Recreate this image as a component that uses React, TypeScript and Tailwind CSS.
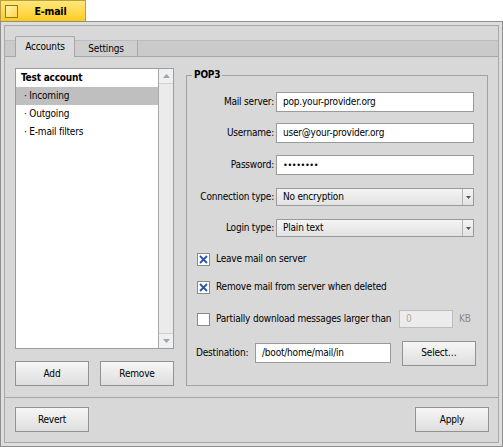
import type { ReactNode } from "react"

function Button({ children, className = "" }: { children: ReactNode; className?: string }) {
  return (
    <button
      className={`h-[25px] w-[74px] border border-[#929292] bg-linear-to-b from-[#f6f6f6] to-[#dedede] text-black ${className}`}
    >
      {children}
    </button>
  )
}

function TextField({ value, className = "" }: { value: string; className?: string }) {
  return (
    <div
      className={`flex h-[20px] items-center whitespace-nowrap border border-[#9a9a9a] bg-white pl-[6px] ${className}`}
    >
      {value}
    </div>
  )
}

function MenuField({ value }: { value: string }) {
  return (
    <div className="flex h-[18px] w-[198px] items-center border border-[#9a9a9a] bg-linear-to-b from-[#f4f4f4] to-[#e2e2e2]">
      <span className="flex-1 pl-[6px]">{value}</span>
      <span className="flex h-full w-[11px] items-center justify-center border-l border-[#b4b4b4]">
        <svg width="5" height="3" viewBox="0 0 5 3">
          <path d="M0 0h5L2.5 3z" fill="#555" />
        </svg>
      </span>
    </div>
  )
}

function CheckBox({ checked }: { checked: boolean }) {
  return (
    <span className="flex h-[13px] w-[13px] shrink-0 items-center justify-center border border-[#8a8a8a] bg-white">
      {checked && (
        <svg width="9" height="9" viewBox="0 0 9 9">
          <path d="M1 1l7 7M8 1L1 8" stroke="#2a55a8" strokeWidth="1.8" />
        </svg>
      )}
    </span>
  )
}

function Row({ label, children }: { label: string; children: ReactNode }) {
  return (
    <div className="flex items-center">
      <span className="w-[89px] whitespace-nowrap pr-[2px] text-right">{label}</span>
      {children}
    </div>
  )
}

function ScrollArrow({ up }: { up: boolean }) {
  return (
    <div className="flex h-[14px] items-center justify-center bg-[#f0f0f0]">
      <svg width="7" height="4" viewBox="0 0 7 4">
        <path d={up ? "M0 4h7L3.5 0z" : "M0 0h7L3.5 4z"} fill="#9aa6b8" />
      </svg>
    </div>
  )
}

export default function App() {
  return (
    <div className="flex h-[447px] w-[503px] flex-col bg-white font-['DejaVu_Sans_Condensed','DejaVu_Sans',sans-serif] font-stretch-condensed text-[10px] leading-none tracking-[-0.2px] text-black">
      {/* window tab */}
      <div className="flex h-[21px] w-[86px] items-center border border-b-0 border-[#b8a040] bg-linear-to-b from-[#ffe777] to-[#ffcb0c]">
        <span className="ml-[4px] h-[13px] w-[13px] border border-[#8f7a20] bg-linear-to-br from-[#fff3b0] to-[#ffd43a]" />
        <span className="flex-1 pr-[2px] text-center text-[10.5px] font-bold">E-mail</span>
      </div>

      {/* window frame */}
      <div className="flex-1 border border-[#8e8e8e] bg-[#dedede] p-[3px]">
        <div className="flex h-full flex-col border border-[#a8a8a8] bg-[#d8d8d8]">
          {/* tab bar */}
          <div className="mt-[10px] flex h-[21px] items-end">
            <div className="h-[17px] w-[10px] border-y border-t-[#bdbdbd] border-b-[#a6a6a6] bg-[#cacaca]" />
            <div className="flex h-[21px] w-[60px] items-center justify-center rounded-t-[2px] border border-b-0 border-[#a6a6a6] bg-[#dadada]">
              Accounts
            </div>
            <div className="flex h-[17px] w-[63px] items-center justify-center border-y border-r border-t-[#bdbdbd] border-r-[#a6a6a6] border-b-[#a6a6a6] bg-[#cecece]">
              Settings
            </div>
            <div className="h-[17px] flex-1 border-y border-t-[#bdbdbd] border-b-[#a6a6a6] bg-[#cacaca]" />
          </div>

          {/* tab panel */}
          <div className="flex h-[341px] border-b border-[#a6a6a6] px-[10px] pt-[11px]">
            <div className="flex w-[159px] flex-col">
              <div className="flex h-[281px] border border-[#9c9c9c] bg-white">
                <div className="flex-1">
                  <div className="flex h-[18px] items-center pl-[5px] font-bold">Test account</div>
                  <div className="flex h-[18px] items-center bg-[#bfbfbf] pl-[8px]">· Incoming</div>
                  <div className="flex h-[18px] items-center pl-[8px]">· Outgoing</div>
                  <div className="flex h-[18px] items-center pl-[8px]">· E-mail filters</div>
                </div>
                <div className="flex w-[15px] flex-col border-l border-[#a8a8a8] bg-[#ebebeb]">
                  <ScrollArrow up />
                  <div className="flex-1 border-y border-[#d0d0d0]" />
                  <ScrollArrow up={false} />
                </div>
              </div>
              <div className="mt-[12px] flex gap-[11px]">
                <Button>Add</Button>
                <Button>Remove</Button>
              </div>
            </div>

            <div className="relative ml-[12px] mt-[7px] flex h-[311px] w-[302px] flex-col border border-[#a2a2a2] pt-[16px]">
              <span className="absolute -top-[6px] left-[5px] bg-[#d8d8d8] px-[2px] font-bold">POP3</span>
              <Row label="Mail server:">
                <TextField value="pop.your-provider.org" className="w-[198px]" />
              </Row>
              <div className="mt-[11px]">
                <Row label="Username:">
                  <TextField value="user@your-provider.org" className="w-[198px]" />
                </Row>
              </div>
              <div className="mt-[12px]">
                <Row label="Password:">
                  <TextField value="••••••••" className="w-[198px] text-[9px] tracking-[-0.4px]" />
                </Row>
              </div>
              <div className="mt-[13px]">
                <Row label="Connection type:">
                  <MenuField value="No encryption" />
                </Row>
              </div>
              <div className="mt-[13px]">
                <Row label="Login type:">
                  <MenuField value="Plain text" />
                </Row>
              </div>
              <div className="mt-[13px] flex h-[18px] items-center pl-[10px]">
                <CheckBox checked />
                <span className="ml-[6px] whitespace-nowrap">Leave mail on server</span>
              </div>
              <div className="mt-[10px] flex h-[18px] items-center pl-[10px]">
                <CheckBox checked />
                <span className="ml-[6px] whitespace-nowrap">Remove mail from server when deleted</span>
              </div>
              <div className="mt-[14px] flex h-[18px] items-center pl-[10px]">
                <div className="flex w-[202px] items-center">
                  <CheckBox checked={false} />
                  <span className="ml-[6px] whitespace-nowrap">Partially download messages larger than</span>
                </div>
                <div className="flex h-[18px] w-[54px] items-center border border-[#bcbcbc] bg-[#ececec] pl-[6px] text-[#a8a8a8]">
                  0
                </div>
                <span className="ml-[6px] text-[#8a8a8a]">KB</span>
              </div>
              <div className="mt-[13px] flex h-[24px] items-center pl-[9px]">
                <span className="w-[59px]">Destination:</span>
                <TextField value="/boot/home/mail/in" className="h-[19px] w-[136px]" />
                <Button className="ml-[11px] h-[24px]">Select…</Button>
              </div>
            </div>
          </div>

          {/* bottom buttons */}
          <div className="flex justify-between pl-[10px] pr-[9px] pt-[9px]">
            <Button>Revert</Button>
            <Button>Apply</Button>
          </div>
        </div>
      </div>
    </div>
  )
}
